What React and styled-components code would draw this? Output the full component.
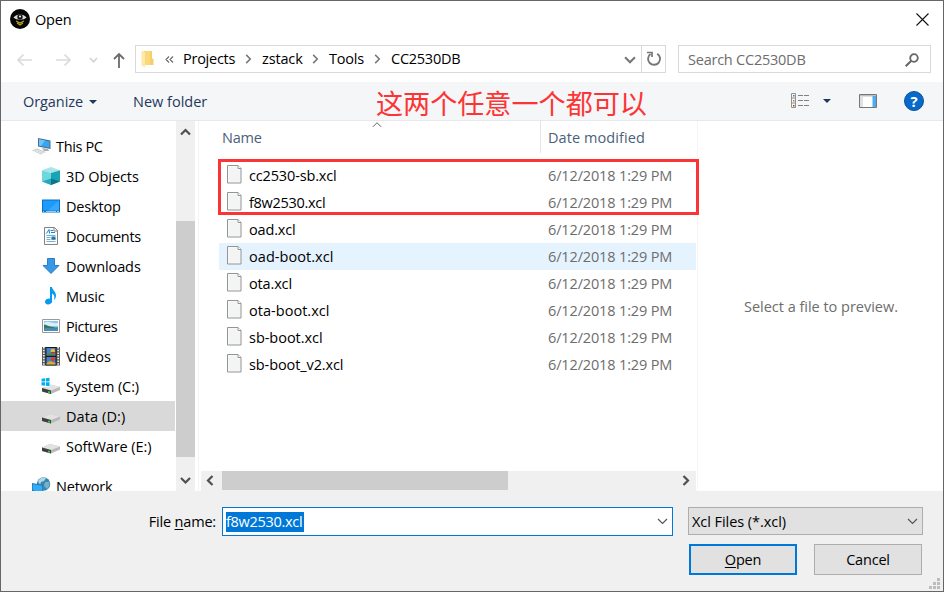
import styled, { createGlobalStyle, css } from "styled-components";

const places = [
    { name: "3D Objects", icon: "cube", spacing: -0.08 },
    { name: "Desktop", icon: "desktop", spacing: -0.17 },
    { name: "Documents", icon: "document", spacing: -0.3 },
    { name: "Downloads", icon: "download", spacing: -0.1 },
    { name: "Music", icon: "music", spacing: -0.2 },
    { name: "Pictures", icon: "picture", spacing: -0.38 },
    { name: "Videos", icon: "video", spacing: 0 },
    { name: "System (C:)", icon: "system", spacing: -0.1 },
    { name: "Data (D:)", icon: "drive", selected: true, spacing: 0.1 },
    { name: "SoftWare (E:)", icon: "drive", spacing: -0.07 },
];

const files = [
    { name: "cc2530-sb.xcl", spacing: -0.15 },
    { name: "f8w2530.xcl", spacing: -0.3 },
    { name: "oad.xcl", spacing: -0.15 },
    { name: "oad-boot.xcl", hover: true, spacing: 0.05 },
    { name: "ota.xcl", spacing: -0.15 },
    { name: "ota-boot.xcl", spacing: 0.03 },
    { name: "sb-boot.xcl", spacing: -0.03 },
    { name: "sb-boot_v2.xcl", spacing: -0.1 },
];

const chevrons = {
    up: "M1 7 L5.5 2.5 L10 7",
    down: "M1 2.5 L5.5 7 L10 2.5",
    left: "M7.5 0.5 L3 5 L7.5 9.5",
    right: "M3.5 0.5 L8 5 L3.5 9.5",
};

function Chevron({ dir, color = "#505050", width = 2, size = 11 }) {
    return (
        <svg width={size} height={size} viewBox="0 0 11 10" fill="none">
            <path d={chevrons[dir]} stroke={color} strokeWidth={width} />
        </svg>
    );
}

function DriveShape() {
    return (
        <>
            <path d="M0 11 L8 7.5 L18 10 L18 13 L9 17 L0 14.5Z" fill="#b9b9b9" />
            <path d="M0 11 L8 7.5 L18 10 L9 13.5Z" fill="#e2e2e2" />
            <path d="M0 11 L9 13.5 L9 17 L0 14.5Z" fill="#3e4040" />
            <path d="M6 14.2h2v1.7H6z" fill="#2fd43a" />
        </>
    );
}

function PlaceIcon({ kind }) {
    return (
        <svg width="18" height="18" viewBox="0 0 18 18">
            {kind === "pc" && (
                <>
                    <path d="M6 1 L18.5 3.5 L18.5 12 L6 9.5Z" fill="#4c6e8c" />
                    <path d="M7 2.2 L17.5 4.4 L17.5 10.8 L7 8.6Z" fill="#35a5f4" />
                    <path d="M7 2.2 L13 3.4 L9 9 L7 8.6Z" fill="#6fc3fa" />
                    <path d="M10 11 L16 12 L17 14 L12 14Z" fill="#a6adb3" />
                    <path d="M0 13.5 L5 11.5 L14 15 L9 17.5Z" fill="#c7cbd0" />
                    <path d="M2 13.6 L11 16.6 M4 12.8 L12.5 15.8" stroke="#f2f3f5" strokeWidth="0.7" />
                </>
            )}
            {kind === "cube" && (
                <>
                    <path d="M0 3.300 L9 0 L18 3.300 L9 6Z" fill="#a5e6ea" />
                    <path d="M0 3.300 L9 6 L9 18 L0 14.500Z" fill="#6dd8e0" />
                    <path d="M18 3.300 L9 6 L9 18 L18 14.500Z" fill="#1ba3b5" />
                    <path d="M0 14.500 L9 11.500 L9 18Z" fill="#26aabb" />
                    <path d="M18 14.500 L9 11.500 L9 18Z" fill="#087788" />
                </>
            )}
            {kind === "desktop" && (
                <>
                    <path d="M0 2.5h18v13H0z" fill="#0971bd" />
                    <path d="M1 3.5h16v10H1z" fill="#1c9bff" />
                    <path d="M17 3.5v10H6z" fill="#38a8ff" />
                    <path d="M1 14.5h1M4 14.5h10M15 14.5h2" stroke="#d9efff" strokeWidth="0.7" />
                </>
            )}
            {kind === "document" && (
                <>
                    <path d="M2.5 0.5h10l3 3v14h-13z" fill="#fbfbfb" stroke="#838383" />
                    <path d="M12 0.5v3.5h3.5" fill="none" stroke="#838383" />
                    <path d="M4.500 6.500 L7 2.500 L7.600 6.500M8.500 3.500h2.500M9 5.500h4" stroke="#1888d1" strokeWidth="1" fill="none" />
                    <path d="M4.500 8.500h9M4.500 10.500h4M4.500 12.500h4M4.500 14.500h9" stroke="#5da8dd" strokeWidth="0.900" />
                    <path d="M9.500 9.500h4v3h-4z" fill="#207bbb" />
                    <path d="M9.500 11.500h4v1h-4z" fill="#257341" />
                </>
            )}
            {kind === "download" && (
                <path d="M5.5 1.5h7v7h4.5L9 16.5 1 8.500h4.500z" fill="#3998e6" stroke="#287ec9" />
            )}
            {kind === "music" && (
                <>
                    <path d="M8 0h2c.3 3 4 4.500 4 8.500 0 2-.8 3.500-2 4.500 1-3.500.2-5.500-2-6.500v8H8z" fill="#069af3" />
                    <ellipse cx="6.600" cy="14.500" rx="3.600" ry="2.800" fill="#069af3" transform="rotate(-15 6.600 14.500)" />
                </>
            )}
            {kind === "picture" && (
                <>
                    <path d="M0.500 2.500h17v13h-17z" fill="#fff" stroke="#9a9a9a" />
                    <path d="M2 4h14v10H2z" fill="#8cc7ed" />
                    <path d="M2 6 C7 3 9 7 16 6 V9 H2z" fill="#d9effa" />
                    <path d="M2 7.500 C6 8 8 10.500 16 10.500 V12 H2z" fill="#3c7568" />
                    <path d="M2 11.500 C7 10 9 12 16 11 V14 H2z" fill="#498eb7" />
                </>
            )}
            {kind === "video" && (
                <>
                    <path d="M0 0h18v18.500H0z" fill="#565656" />
                    <path d="M1.800 0v18.500M16.200 0v18.500" stroke="#eee" strokeWidth="1.700" strokeDasharray="1.500 1.200" />
                    <path d="M3.500 0h11v18.500h-11z" fill="#181818" />
                    <path d="M4.500 1h9v7.500h-9zM4.500 10h9v7.500h-9z" fill="#4184d5" />
                    <circle cx="10.800" cy="4" r="2.300" fill="#e6bd28" />
                    <path d="M9 5h4v1.500H9z" fill="#c8342b" />
                    <path d="M4.500 7 L8 6.200 L13.500 7.500 V8.500 H4.500z" fill="#53883a" />
                    <circle cx="10.800" cy="12.300" r="2" fill="#db3b28" />
                    <path d="M4.500 16 L8 14 L13.500 16 V17.500 H4.500z" fill="#d6ac31" />
                </>
            )}
            {kind === "drive" && <g transform="translate(0 -0.500)"><DriveShape /></g>}
            {kind === "system" && (
                <>
                    <DriveShape />
                    <path d="M-1 0h9v10h-9z" fill="#fff" />
                    <path d="M-0.500 1.800 L3 1.300V4.500H-0.500zM3.800 1.200 L7.500.7V4.500H3.800zM-0.500 5.300H3V8.700L-0.500 8.200zM3.800 5.300H7.500V9.300L3.800 8.800z" fill="#00adef" />
                </>
            )}
            {kind === "network" && (
                <>
                    <circle cx="11.500" cy="7" r="6.700" fill="#3c86ae" />
                    <path d="M6 4 C8 0 13 0 14 1 L12 4 L9 5 L8 8z" fill="#b4d8e6" />
                    <path d="M13 5 L17 5 C18 8 17 10 15 12 L12 9z" fill="#75b1cc" />
                    <path d="M0 6 L11 8 L11 17 L0 14z" fill="#1778b4" />
                    <path d="M0.700 7 L10.300 8.800 L10.300 15.800 L0.700 13.200z" fill="#35abf5" />
                </>
            )}
        </svg>
    );
}

function FileIcon() {
    return (
        <svg width="15" height="19" viewBox="0 0 15 19">
            <path d="M0.500 0.500h10.500l3 3v14.500h-13.500z" fill="#f7f8f8" stroke="#949494" />
            <path d="M11 0.500v3h3" fill="#fff" stroke="#949494" />
            <path d="M2 2h8v3h3v11.500H2z" fill="#f3f5f5" />
        </svg>
    );
}

export default function App() {
    return (
        <>
            <GlobalStyle />
            <Dialog>
                <TitleBar>
                    <svg width="20" height="20" viewBox="0 0 20 20">
                        <circle cx="10" cy="10" r="10" fill="#050505" />
                        <path d="M3.500 8.500 C6.500 4.500 13.500 4.500 16.500 8.500 C13.500 11.500 6.500 11.500 3.500 8.500z" fill="#d8d8d8" />
                        <circle cx="10" cy="8" r="2.700" fill="#151515" />
                        <circle cx="10" cy="7.500" r="1" fill="#fff" />
                        <path d="M6 12 L10 14 L14 12 M7 14 L10 16 L13 14" fill="none" stroke="#bba225" strokeWidth="1.200" />
                    </svg>
                    <Title><Text $spacing={-0.2}>Open</Text></Title>
                    <CloseButton>
                        <svg width="13" height="13" viewBox="0 0 13 13">
                            <path d="M0.500 0.500 L12.500 12.500 M12.500 0.500 L0.500 12.500" stroke="#111" strokeWidth="1.100" />
                        </svg>
                    </CloseButton>
                </TitleBar>

                <NavBar>
                    <NavButtons>
                        <svg width="110" height="20" viewBox="0 0 110 20" fill="none">
                            <path d="M15 10H1M6.500 4.500 L1 10 L6.500 15.500" stroke="#dadada" strokeWidth="1.600" />
                            <path d="M39 10H53M47.500 4.500 L53 10 L47.500 15.500" stroke="#dadada" strokeWidth="1.600" />
                            <path d="M73 8 L76.500 11.800 L80 8" stroke="#d2d2d2" strokeWidth="1.600" />
                            <path d="M102 18V4M97 9 L102 4 L107 9" stroke="#6b6b6b" strokeWidth="1.800" />
                        </svg>
                    </NavButtons>
                    <AddressBar>
                        <svg width="14" height="18" viewBox="0 0 14 18">
                            <path d="M3 1h8v14H3z" fill="#edc262" />
                            <path d="M4 1h6.500v14H4z" fill="#fad97c" />
                            <path d="M11 8.500h1.500V15H9V1h2z" fill="#f6cf6b" />
                            <path d="M0.500 0.500 L4 2v15.500L0.500 15.500z" fill="#ffe9a6" />
                        </svg>
                        <Back>
                            <svg width="9" height="7" viewBox="0 0 9 7" fill="none">
                                <path d="M4 .5 L1 3.500 L4 6.500 M8 .5 L5 3.500 L8 6.500" stroke="#666" strokeWidth="1.100" />
                            </svg>
                        </Back>
                        <Crumb $width={79}>
                            <Text $spacing={-0.25}>Projects</Text>
                            <Chevron dir="right" color="#777" width={1.700} size={10} />
                        </Crumb>
                        <Crumb $width={67}>
                            <Text $spacing={-0.15}>zstack</Text>
                            <Chevron dir="right" color="#777" width={1.700} size={10} />
                        </Crumb>
                        <Crumb $width={62}>
                            <Text $spacing={-0.2}>Tools</Text>
                            <Chevron dir="right" color="#777" width={1.700} size={10} />
                        </Crumb>
                        <Text $spacing={-0.25}>CC2530DB</Text>
                        <AddressDrop><Chevron dir="down" color="#777" width={1.900} size={12} /></AddressDrop>
                        <Refresh>
                            <svg width="16" height="16" viewBox="0 0 16 16" fill="none">
                                <path d="M11.200 2.700 A6 6 0 1 1 4.500 3" stroke="#777" strokeWidth="1.900" />
                                <path d="M1 1.500 H6 V6" stroke="#777" strokeWidth="1.700" />
                            </svg>
                        </Refresh>
                    </AddressBar>
                    <SearchBox>
                        <Text $color="#6d6d6d" $spacing={-0.23}>Search CC2530DB</Text>
                        <svg width="14" height="14" viewBox="0 0 14 14" fill="none">
                            <circle cx="9" cy="5" r="3.800" stroke="#666" strokeWidth="1.800" />
                            <path d="M6.300 7.700 L0.700 13.300" stroke="#666" strokeWidth="2" />
                        </svg>
                    </SearchBox>
                </NavBar>

                <ToolBar>
                    <ToolItem $width={110}>
                        <Text $color="#1e395b" $spacing={-0.07}>Organize</Text>
                        <Triangle />
                    </ToolItem>
                    <Text $color="#1e395b" $spacing={0}>New folder</Text>
                    <ViewTools>
                        <svg width="20" height="18" viewBox="0 0 20 18" fill="none">
                            <path d="M0.500 1.500h4v14h-4zM0.500 6h4M0.500 11h4" stroke="#929292" />
                            <path d="M7 3.500h5M13 3.500h5M7 8.500h5M13 8.500h5M7 13.500h5M13 13.500h5" stroke="#818181" />
                            <path d="M2 3h1.500v1.500H2z" fill="#3182c4" />
                            <path d="M2 8h1.500v1.500H2z" fill="#a88d25" />
                            <path d="M2 13h1.500v1.500H2z" fill="#bd351c" />
                        </svg>
                        <Triangle />
                        <PaneIcon width="18" height="14" viewBox="0 0 18 14">
                            <path d="M0.500 0.500h17v13H0.500z" fill="#fff" stroke="#777" />
                            <path d="M1 1h16v1.500H1z" fill="#bebebe" />
                            <path d="M1 2.500h3V13H1z" fill="#e1e1e1" />
                            <path d="M13.500 2h3.500v11h-3.500z" fill="#4eaced" />
                        </PaneIcon>
                        <Help>?</Help>
                    </ViewTools>
                    <Note>这两个任意一个都可以</Note>
                </ToolBar>

                <Body>
                    <Tree>
                        <TreeRow $root>
                            <PlaceIcon kind="pc" />
                            <Text $spacing={-0.35}>This PC</Text>
                        </TreeRow>
                        {places.map((place) => (
                            <TreeRow key={place.name} $selected={place.selected}>
                                <PlaceIcon kind={place.icon} />
                                <Text $spacing={place.spacing}>{place.name}</Text>
                            </TreeRow>
                        ))}
                        <TreeRow $root $gap>
                            <PlaceIcon kind="network" />
                            <Text $spacing={-0.2}>Network</Text>
                        </TreeRow>
                    </Tree>
                    <TreeScroll>
                        <ScrollEnd><Chevron dir="up" width={2.200} /></ScrollEnd>
                        <VerticalThumb />
                        <ScrollEnd><Chevron dir="down" width={2.200} /></ScrollEnd>
                    </TreeScroll>
                    <FilePane>
                        <FileHeader>
                            <NameHeader>
                                <Text $color="#4c607a" $spacing={-0.2}>Name</Text>
                                <SortMark><Chevron dir="up" color="#666" width={1.100} size={10} /></SortMark>
                            </NameHeader>
                            <DateHeader><Text $color="#4c607a" $spacing={0.08}>Date modified</Text></DateHeader>
                        </FileHeader>
                        <FileList>
                            {files.map((file) => (
                                <FileRow key={file.name} $hover={file.hover}>
                                    <FileIcon />
                                    <FileName><Text $spacing={file.spacing}>{file.name}</Text></FileName>
                                    <Text $color="#6d6d6d" $spacing={-0.14}>6/12/2018 1:29 PM</Text>
                                </FileRow>
                            ))}
                            <Highlight />
                        </FileList>
                        <FileScroll>
                            <ScrollEnd $short><Chevron dir="left" width={2.200} /></ScrollEnd>
                            <HorizontalThumb />
                            <ScrollEnd $short><Chevron dir="right" width={2.200} /></ScrollEnd>
                        </FileScroll>
                    </FilePane>
                    <Preview>
                        <Text $color="#6d6d6d" $spacing={-0.02}>Select a file to preview.</Text>
                    </Preview>
                </Body>

                <Footer>
                    <FileField>
                        <FieldLabel><Text $spacing={-0.18}>File <u>n</u>ame:</Text></FieldLabel>
                        <NameInput>
                            <Selection><Text $color="#fff" $spacing={-0.3}>f8w2530.xcl</Text></Selection>
                            <Chevron dir="down" color="#555" width={1.200} />
                        </NameInput>
                        <TypeSelect>
                            <SelectText><Text $spacing={-0.05}>Xcl Files (*.xcl)</Text></SelectText>
                            <Chevron dir="down" color="#555" width={1.200} />
                        </TypeSelect>
                    </FileField>
                    <Actions>
                        <Button $primary><Text $spacing={-0.2}><u>O</u>pen</Text></Button>
                        <Button><Text $spacing={-0.2}>Cancel</Text></Button>
                    </Actions>
                    <Grip width="12" height="12" viewBox="0 0 12 12">
                        <path d="M8 0h3v3H8zM4 4h3v3H4zM8 4h3v3H8zM0 8h3v3H0zM4 8h3v3H4zM8 8h3v3H8z" fill="#bdbdbd" />
                    </Grip>
                </Footer>
            </Dialog>
        </>
    );
}

const GlobalStyle = createGlobalStyle`
    * {
        box-sizing: border-box;
    }
    body {
        margin: 0;
        overflow: hidden;
        font-family: "Open Sans", "Noto Sans", sans-serif;
        font-size: 14.5px;
        color: #000;
    }
    svg {
        display: block;
        flex-shrink: 0;
        overflow: visible;
    }
    u {
        text-underline-offset: 2px;
        text-decoration-thickness: 1px;
    }
`;
const Dialog = styled.div`
    width: 944px;
    height: 592px;
    display: flex;
    flex-direction: column;
    border: 1px solid #666;
    background: #fff;
`;
const Text = styled.span`
    color: ${(p) => p.$color || "#000"};
    letter-spacing: ${(p) => p.$spacing || 0}px;
    line-height: 20px;
    white-space: pre;
`;
const TitleBar = styled.div`
    height: 36px;
    display: flex;
    align-items: center;
    gap: 5px;
    padding: 0 14px 0 9px;
`;
const Title = styled.div`
    padding-top: 2px;
`;
const CloseButton = styled.div`
    margin-left: auto;
`;
const NavBar = styled.div`
    height: 44px;
    display: flex;
    align-items: center;
    margin-bottom: 1px;
    padding: 0 12px 0 16px;
`;
const NavButtons = styled.div`
    width: 118px;
    padding-top: 2px;
`;
const boxed = css`
    height: 28px;
    display: flex;
    align-items: center;
    border: 1px solid #d9d9d9;
`;
const AddressBar = styled.div`
    ${boxed}
    width: 531px;
    padding-left: 5px;
`;
const Back = styled.div`
    width: 28px;
    padding-left: 10px;
`;
const Crumb = styled.div`
    width: ${(p) => p.$width}px;
    display: flex;
    align-items: center;
    justify-content: space-between;
    padding-right: 9px;
`;
const AddressDrop = styled.div`
    margin-left: auto;
    padding: 2px 5px 0 0;
`;
const Refresh = styled.div`
    width: 24px;
    height: 26px;
    display: flex;
    align-items: center;
    justify-content: center;
    border-left: 1px solid #d9d9d9;
`;
const SearchBox = styled.div`
    ${boxed}
    width: 253px;
    justify-content: space-between;
    margin-left: 12px;
    padding: 1px 11px 0 9px;
`;
const ToolBar = styled.div`
    position: relative;
    height: 39px;
    display: flex;
    align-items: center;
    padding: 1px 19px 0 22px;
    background: #f5f6f8;
    border-bottom: 1px solid #e7e8ea;
`;
const ToolItem = styled.div`
    width: ${(p) => p.$width}px;
    display: flex;
    align-items: center;
    gap: 6px;
`;
const Triangle = styled.div`
    border: 4px solid transparent;
    border-top-color: #1e395b;
    border-bottom: 0;
`;
const ViewTools = styled.div`
    display: flex;
    align-items: center;
    margin: -2px 0 0 auto;
    gap: 12px;
`;
const PaneIcon = styled.svg`
    margin-left: 16px;
`;
const Help = styled.div`
    width: 20px;
    height: 20px;
    margin-left: 15px;
    border: 1px solid #07549f;
    border-radius: 50%;
    background: #0969c9;
    color: #fff;
    font-size: 15px;
    font-weight: 700;
    line-height: 18px;
    text-align: center;
`;
// hand-written remark lying over the toolbar
const Note = styled.div`
    position: absolute;
    left: 375px;
    top: 1px;
    color: #fb3535;
    font-family: "Noto Sans CJK SC", sans-serif;
    font-size: 27.1px;
    line-height: 40px;
    white-space: nowrap;
`;
const Body = styled.div`
    height: 370px;
    display: flex;
    overflow: hidden;
`;
const Tree = styled.div`
    width: 175px;
    height: 370px;
    padding-top: 10px;
    overflow: hidden;
`;
const TreeRow = styled.div`
    width: 174px;
    height: 30px;
    display: flex;
    align-items: center;
    gap: 6px;
    margin-top: ${(p) => (p.$gap ? 10 : 0)}px;
    padding-left: ${(p) => (p.$root ? 31 : 41)}px;
    background: ${(p) => (p.$selected ? "#d9d9d9" : "transparent")};
    span {
        margin-top: 2px;
    }
`;
const TreeScroll = styled.div`
    width: 19px;
    display: flex;
    flex-direction: column;
    justify-content: space-between;
    padding: 1px 0;
    background: #f0f0f0;
`;
const ScrollEnd = styled.div`
    width: 19px;
    height: ${(p) => (p.$short ? 18 : 20)}px;
    display: flex;
    align-items: center;
    justify-content: center;
`;
const VerticalThumb = styled.div`
    height: 236px;
    margin-top: auto;
    margin-bottom: 13px;
    background: #cdcdcd;
`;
const FilePane = styled.div`
    width: 500px;
    display: flex;
    flex-direction: column;
    margin-left: 3px;
    border-left: 1px solid #f3f3f3;
    border-right: 1px solid #f5f5f5;
    padding-left: 1px;
`;
const FileHeader = styled.div`
    height: 32px;
    display: flex;
    gap: 7px;
`;
const NameHeader = styled.div`
    position: relative;
    width: 341px;
    height: 32px;
    padding: 7px 0 0 22px;
    border-right: 1px solid #e5e5e5;
`;
const DateHeader = styled.div`
    padding-top: 7px;
`;
const SortMark = styled.div`
    position: absolute;
    left: 172px;
    top: -1px;
`;
const FileList = styled.div`
    position: relative;
    height: 318px;
    padding: 9px 0 0 19px;
`;
const FileRow = styled.div`
    width: 477px;
    height: 27px;
    display: flex;
    align-items: center;
    padding-left: 8px;
    background: ${(p) => (p.$hover ? "#e5f3ff" : "transparent")};
    svg {
        margin-top: -3px;
    }
`;
const FileName = styled.div`
    width: 306px;
    padding-left: 7px;
`;
const Highlight = styled.div`
    position: absolute;
    left: 18px;
    top: 6px;
    width: 481px;
    height: 56px;
    border: 3px solid #fb3535;
`;
const FileScroll = styled.div`
    width: 495px;
    height: 20px;
    display: flex;
    justify-content: space-between;
    background: #f0f0f0;
    margin-left: 1px;
    padding-right: 1px;
`;
const HorizontalThumb = styled.div`
    width: 286px;
    height: 19px;
    margin-left: 2px;
    margin-right: auto;
    background: #cdcdcd;
`;
const Preview = styled.div`
    flex: 1;
    display: flex;
    justify-content: center;
    align-items: center;
    padding: 2px 0 0 1px;
`;
const Footer = styled.div`
    position: relative;
    flex: 1;
    padding: 16px 20px 0 0;
    background: #f0f0f0;
`;
const FileField = styled.div`
    display: flex;
`;
const FieldLabel = styled.div`
    width: 221px;
    padding: 5px 6px 0 0;
    text-align: right;
`;
const NameInput = styled.div`
    width: 451px;
    height: 29px;
    display: flex;
    align-items: center;
    justify-content: space-between;
    padding: 0 4px 0 3px;
    border: 1px solid #0078d7;
    background: #fff;
`;
const Selection = styled.div`
    width: 78px;
    height: 20px;
    background: #0078d7;
`;
const TypeSelect = styled.div`
    width: 235px;
    height: 28px;
    display: flex;
    align-items: center;
    justify-content: space-between;
    flex-shrink: 0;
    margin-left: 15px;
    padding: 0 4px 0 3px;
    border: 1px solid #adadad;
    background: #e1e1e1;
`;
const SelectText = styled.div`
    padding-top: 2px;
`;
const Actions = styled.div`
    display: flex;
    justify-content: flex-end;
    gap: 17px;
    margin-top: 8px;
    padding-right: 1px;
`;
const Button = styled.div`
    width: 108px;
    height: 31px;
    display: flex;
    align-items: center;
    justify-content: center;
    border: ${(p) => (p.$primary ? "2px solid #0078d7" : "1px solid #adadad")};
    background: #e1e1e1;
`;
const Grip = styled.svg`
    position: absolute;
    right: 2px;
    bottom: 1px;
`;
